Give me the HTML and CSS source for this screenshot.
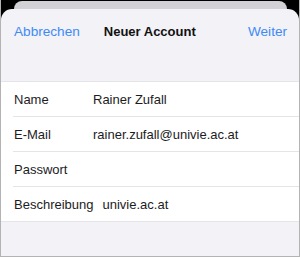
FILE: index.html
```html
<!DOCTYPE html>
<html lang="de">
<head>
<meta charset="utf-8">
<title>Neuer Account</title>
<link rel="stylesheet" href="styles.css">
</head>
<body>
<div class="frame">
  <div class="backsheet"></div>
  <div class="sheet">
    <div class="nav">
      <span class="nav-btn">Abbrechen</span>
      <span class="nav-title">Neuer Account</span>
      <span class="nav-btn nav-btn-right">Weiter</span>
    </div>
    <div class="list">
      <div class="row"><span class="label">Name</span><span class="value">Rainer Zufall</span></div>
      <div class="row"><span class="label">E-Mail</span><span class="value">rainer.zufall@univie.ac.at</span></div>
      <div class="row"><span class="label">Passwort</span><span class="value"></span></div>
      <div class="row"><span class="label">Beschreibung</span><span class="value">univie.ac.at</span></div>
    </div>
  </div>
</div>
</body>
</html>
```
FILE: styles.css
```css
html, body {
  margin: 0;
  padding: 0;
  background: #000;
}
.frame {
  width: 300px;
  height: 257px;
  box-sizing: border-box;
  border: 1px solid #b3b3b3;
  border-top: none;
  background: #000;
  display: flex;
  flex-direction: column;
  font-family: "Liberation Sans", Arial, sans-serif;
  color: #1c1c1e;
  overflow: hidden;
}
.backsheet {
  flex: 0 0 8px;
  margin: 1px 12px 0 13px;
  background: #d2d2d6;
  border-radius: 10px 10px 0 0;
}
.sheet {
  flex: 1;
  background: #f2f2f7;
  border-radius: 11px 11px 0 0;
  display: flex;
  flex-direction: column;
}
.nav {
  height: 44px;
  display: flex;
  align-items: center;
  padding: 0 12px 0 13px;
}
.nav-btn {
  color: #3e8af5;
  font-size: 13.6px;
}
.nav-btn-right {
  margin-left: auto;
}
.nav-title {
  font-size: 13px;
  font-weight: bold;
  margin-left: 24px;
  color: #111;
}
.list {
  margin-top: 28px;
  background: #fff;
  border-top: 1px solid #e4e4e9;
  border-bottom: 1px solid #e4e4e9;
}
.row {
  height: 35px;
  box-sizing: border-box;
  display: flex;
  align-items: center;
  margin-left: 12px;
  padding-left: 1px;
  font-size: 13px;
  border-bottom: 1px solid #e4e4e9;
}
.row:last-child {
  border-bottom: none;
  height: 34px;
}
.label {
  min-width: 70px;
  padding-right: 9px;
  flex-shrink: 0;
}
.value {
  white-space: nowrap;
}
```
